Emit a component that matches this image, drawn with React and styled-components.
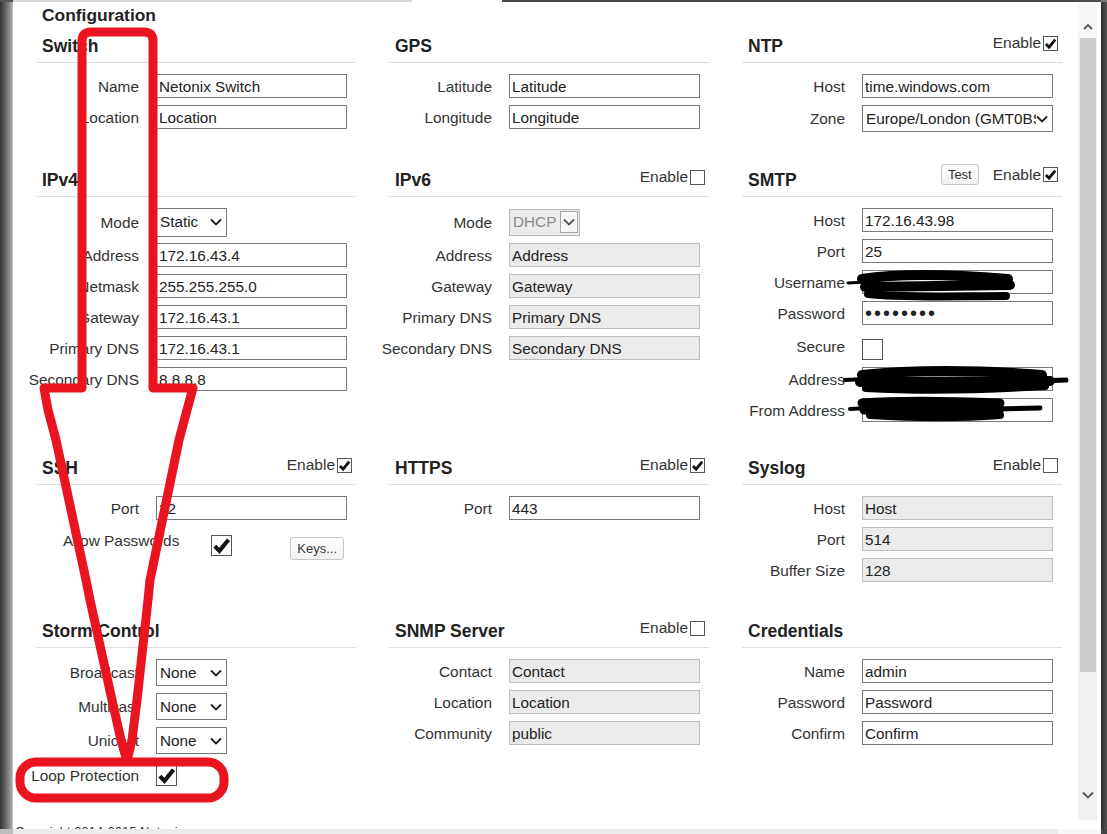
import React from "react";
import styled, { createGlobalStyle } from "styled-components";

const FONT = `"Liberation Sans", Arial, sans-serif`;
const RED = "#e9141f";

const GlobalStyle = createGlobalStyle`
  html, body {
    margin: 0;
    padding: 0;
    background: #fff;
    overflow: hidden;
  }
  body {
    font-family: ${FONT};
    color: #333;
  }
`;

// window chrome
const Window = styled.div`
  position: relative;
  width: 1107px;
  height: 834px;
  display: flex;
  flex-direction: column;
  overflow: hidden;
  background: #fff;
`;

const TopEdge = styled.div`
  flex: none;
  height: 2px;
  background: linear-gradient(
    to right,
    #555 0 13px,
    #d8d8d8 13px 412px,
    #fff 412px 502px,
    #4a4a4a 502px 1101px,
    #777 1101px
  );
`;

const Frame = styled.div`
  flex: 1;
  min-height: 0;
  display: flex;
`;

const LeftRail = styled.div`
  flex: none;
  width: 13px;
  background: linear-gradient(
    to right,
    #333 0,
    #4c4c4c 3px,
    #7d7d7d 8px,
    #a8a8a8 12px,
    #d6d6d6 13px
  );
`;

const Panel = styled.main`
  flex: 1;
  min-width: 0;
  overflow: hidden;
  padding-top: 3px;
`;

const ScrollTrack = styled.div`
  flex: none;
  width: 19px;
  margin-bottom: 9px;
  background: #f0f0f0;
  display: flex;
  flex-direction: column;
`;

const ScrollArrow = styled.div`
  display: flex;
  justify-content: center;
  align-items: ${(p) => (p.$down ? "flex-end" : "flex-start")};
  height: ${(p) => p.$h}px;
  padding: ${(p) => (p.$down ? "0 0 21px" : "21px 0 0")};
  box-sizing: border-box;
  background: ${(p) => (p.$down ? "#f0f0f0" : "#f7f7f7")};
`;

const Thumb = styled.div`
  height: 634px;
  margin: 0 1px 0 2px;
  background: #cdcdcd;
`;

const TrackRest = styled.div`
  flex: 1;
`;

const RightEdge = styled.div`
  flex: none;
  width: 10px;
  background: linear-gradient(to right, #fff 0 4px, #2c2c2c 4px, #555 10px);
`;

const BottomStrip = styled.div`
  flex: none;
  height: 5px;
  background: linear-gradient(
    to right,
    #bdbdbd 0 13px,
    #ebebeb 13px 1058px,
    #f8f8f8 1058px 1101px,
    #444 1101px
  );
`;

// page content
const PageTitle = styled.h2`
  margin: 0 0 3px 29px;
  font-size: 17.4px;
  line-height: 20px;
  font-weight: bold;
  color: #222;
`;

const Grid = styled.div`
  margin-left: 23px;
  display: grid;
  grid-template-columns: repeat(3, 320px);
  grid-template-rows: 134px 288px 163px 205px;
  column-gap: 33px;
`;

const Copyright = styled.footer`
  margin: 6px 0 0 2px;
  font-size: 13px;
  line-height: 16px;
  color: #333;
  white-space: nowrap;
`;

const Section = styled.section`
  display: flex;
  flex-direction: column;
  min-width: 0;
`;

const Header = styled.header`
  height: 34px;
  flex: none;
  display: flex;
  align-items: flex-end;
  justify-content: space-between;
  padding: 0 4px 0 6px;
  border-bottom: 1px solid #dedede;
`;

const Title = styled.h3`
  margin: 0 0 6px;
  font-size: 17.5px;
  line-height: 20px;
  font-weight: bold;
  color: #222;
`;

const Tools = styled.div`
  display: flex;
  align-items: center;
  gap: 14px;
  margin-bottom: 11px;
`;

const EnableLabel = styled.label`
  display: inline-flex;
  align-items: center;
  gap: 2px;
  font-size: 15.5px;
  line-height: 16px;
  color: #333;
`;

const Body = styled.div`
  padding-top: 11px;
  display: flex;
  flex-direction: column;
  gap: 7px;
`;

const Row = styled.div`
  display: flex;
  align-items: center;
  height: ${(p) => p.$h || 24}px;
`;

const Label = styled.label`
  flex: none;
  width: 120px;
  box-sizing: border-box;
  padding: 1px 17px 0 0;
  display: flex;
  justify-content: flex-end;
  font-size: 15.4px;
  color: #333;
  white-space: nowrap;
`;

const TextInput = styled.input`
  width: 191px;
  height: 24px;
  box-sizing: border-box;
  margin: 0;
  padding: 1px 2px 0;
  border: 1px solid ${(p) => (p.$muted ? "#bdbdbd" : "#7a7a7a")};
  background: ${(p) => (p.$muted ? "#ebebeb" : "#fff")};
  font: 15.3px ${FONT};
  color: #222;
  outline: none;

  &[type="password"] {
    font-size: 20px;
    letter-spacing: 2px;
    padding-top: 0;
  }
`;

const SelectBox = styled.div`
  display: flex;
  align-items: center;
  width: ${(p) => p.$w}px;
  height: ${(p) => p.$h}px;
  box-sizing: border-box;
  padding: ${(p) => (p.$disabled ? "0 1px 0 3px" : "0 4px 0 3px")};
  border: 1px solid ${(p) => (p.$disabled ? "#b8b8b8" : "#7a7a7a")};
  background: ${(p) => (p.$disabled ? "#ebebeb" : "#fff")};
  font-size: 15.3px;
  color: ${(p) => (p.$disabled ? "#8c8c8c" : "#222")};
`;

const SelectText = styled.span`
  flex: 1;
  min-width: 0;
  overflow: hidden;
  white-space: nowrap;
`;

const DropButton = styled.span`
  display: flex;
  align-items: center;
  justify-content: center;
  width: 18px;
  height: 22px;
  box-sizing: border-box;
  border: 1px solid #a8a8a8;
  background: #f6f6f6;
`;

const Box = styled.span`
  flex: none;
  display: inline-flex;
  align-items: center;
  justify-content: center;
  width: ${(p) => p.$size}px;
  height: ${(p) => p.$size}px;
  box-sizing: border-box;
  border: 1px solid #555;
  background: #fff;
  align-self: ${(p) => p.$self || "auto"};
  margin: ${(p) => p.$margin || 0};
`;

const SmallButton = styled.button`
  height: ${(p) => p.$h}px;
  margin: ${(p) => p.$margin || 0};
  padding: 0 6px;
  border: 1px solid #c6c6c6;
  border-radius: 3px;
  background: linear-gradient(#fff, #f2f2f2);
  font: 13px ${FONT};
  color: #333;
`;

const OptionRow = styled.div`
  display: flex;
  align-items: flex-start;
  height: 33px;
`;

const OptionText = styled.span`
  margin: 5px 0 0 27px;
  font-size: 15.4px;
  line-height: 18px;
  color: #333;
  white-space: nowrap;
`;

const Overlay = styled.svg`
  position: absolute;
  left: 0;
  top: 0;
  pointer-events: none;
`;

const Chevron = ({ color = "#222" }) => (
  <svg width="12" height="8" viewBox="0 0 12 8">
    <polyline points="1,1.5 6,6.5 11,1.5" fill="none" stroke={color} strokeWidth="1.8" />
  </svg>
);

const ChevronUp = () => (
  <svg width="10" height="7" viewBox="0 0 10 7">
    <polyline points="1,6 5,2 9,6" fill="none" stroke="#555" strokeWidth="1.8" />
  </svg>
);

const Checkbox = ({ checked, size = 15, self, margin }) => (
  <Box $size={size} $self={self} $margin={margin}>
    {checked && (
      <svg width={size - 2} height={size - 2} viewBox="0 0 12 12">
        <path d="M1.8 6.4 L4.7 9.4 L10.4 2.4" fill="none" stroke="#111" strokeWidth="2.6" />
      </svg>
    )}
  </Box>
);

const Select = ({ value, width = 71, height = 27, disabled }) => (
  <SelectBox $w={width} $h={height} $disabled={disabled}>
    <SelectText>{value}</SelectText>
    {disabled ? (
      <DropButton>
        <Chevron color="#555" />
      </DropButton>
    ) : (
      <Chevron />
    )}
  </SelectBox>
);

const SectionHead = ({ title, enable, checked, extra }) => (
  <Header>
    <Title>{title}</Title>
    {enable && (
      <Tools>
        {extra}
        <EnableLabel>
          Enable
          <Checkbox checked={checked} />
        </EnableLabel>
      </Tools>
    )}
  </Header>
);

const Field = ({ label, h, children }) => (
  <Row $h={h}>
    <Label>{label}</Label>
    {children}
  </Row>
);

const Input = ({ value, muted, type = "text" }) => (
  <TextInput type={type} defaultValue={value} readOnly $muted={muted} />
);

const Annotations = () => (
  <Overlay width="1107" height="834" viewBox="0 0 1107 834">
    {/* red arrow */}
    <path
      d="M44 388 L82 388 L82 41 Q82 32 91 32 L144 32 Q153 32 153 41 L153 388 L193 388 L187 410 L179 440 L150 580 L148 600 L137 700 L132 740 L127 761 L121 740 L112 700 L90 600 L86 580 L56 440 L48 410 Z"
      fill="none"
      stroke={RED}
      strokeWidth="9"
      strokeLinejoin="round"
    />
    <rect x="20" y="762" width="204" height="36" rx="16" fill="none" stroke={RED} strokeWidth="9" />
    {/* redaction scribbles */}
    <g fill="none" stroke="#000" strokeLinecap="round">
      <path d="M848 283 L866 282" strokeWidth="3" />
      <path d="M862 279 C900 273, 960 275, 1008 279" strokeWidth="10" />
      <path d="M865 287 L1010 285" strokeWidth="10" />
      <path d="M868 294 C900 298, 960 296, 1006 296" strokeWidth="8" />
      <path d="M845 380 L866 379" strokeWidth="4" />
      <path d="M862 375 C920 369, 990 371, 1042 375" strokeWidth="10" />
      <path d="M860 382 L1050 381" strokeWidth="10" />
      <path d="M1040 381 L1066 380" strokeWidth="5" />
      <path d="M866 388 C920 391, 980 390, 1045 386" strokeWidth="8" />
      <path d="M850 409 L868 408" strokeWidth="4" />
      <path d="M862 403 C900 400, 950 401, 1000 403" strokeWidth="9" />
      <path d="M864 410 L1000 409" strokeWidth="9" />
      <path d="M995 409 L1040 408" strokeWidth="5" />
      <path d="M870 415 C920 418, 960 418, 1000 415" strokeWidth="8" />
    </g>
  </Overlay>
);

const App = () => {
  return (
    <>
      <GlobalStyle />
      <Window>
        <TopEdge />
        <Frame>
          <LeftRail />
          <Panel>
            <PageTitle>Configuration</PageTitle>
            <Grid>
              {/* row 1 */}
              <Section>
                <SectionHead title="Switch" />
                <Body>
                  <Field label="Name"><Input value="Netonix Switch" /></Field>
                  <Field label="Location"><Input value="Location" /></Field>
                </Body>
              </Section>
              <Section>
                <SectionHead title="GPS" />
                <Body>
                  <Field label="Latitude"><Input value="Latitude" /></Field>
                  <Field label="Longitude"><Input value="Longitude" /></Field>
                </Body>
              </Section>
              <Section>
                <SectionHead title="NTP" enable checked />
                <Body>
                  <Field label="Host"><Input value="time.windows.com" /></Field>
                  <Field label="Zone" h={27}>
                    <Select value="Europe/London (GMT0BST)" width={191} />
                  </Field>
                </Body>
              </Section>

              {/* row 2 */}
              <Section>
                <SectionHead title="IPv4" />
                <Body>
                  <Field label="Mode" h={28}><Select value="Static" height={29} /></Field>
                  <Field label="Address"><Input value="172.16.43.4" /></Field>
                  <Field label="Netmask"><Input value="255.255.255.0" /></Field>
                  <Field label="Gateway"><Input value="172.16.43.1" /></Field>
                  <Field label="Primary DNS"><Input value="172.16.43.1" /></Field>
                  <Field label="Secondary DNS"><Input value="8.8.8.8" /></Field>
                </Body>
              </Section>
              <Section>
                <SectionHead title="IPv6" enable />
                <Body>
                  <Field label="Mode" h={28}><Select value="DHCP" disabled /></Field>
                  <Field label="Address"><Input value="Address" muted /></Field>
                  <Field label="Gateway"><Input value="Gateway" muted /></Field>
                  <Field label="Primary DNS"><Input value="Primary DNS" muted /></Field>
                  <Field label="Secondary DNS"><Input value="Secondary DNS" muted /></Field>
                </Body>
              </Section>
              <Section>
                <SectionHead
                  title="SMTP"
                  enable
                  checked
                  extra={<SmallButton $h={21}>Test</SmallButton>}
                />
                <Body>
                  <Field label="Host"><Input value="172.16.43.98" /></Field>
                  <Field label="Port"><Input value="25" /></Field>
                  <Field label="Username"><Input value="" /></Field>
                  <Field label="Password"><Input value="password" type="password" /></Field>
                  <Field label="Secure" h={28}><Checkbox size={21} self="flex-end" /></Field>
                  <Field label="Address"><Input value="" /></Field>
                  <Field label="From Address"><Input value="" /></Field>
                </Body>
              </Section>

              {/* row 3 */}
              <Section>
                <SectionHead title="SSH" enable checked />
                <Body>
                  <Field label="Port"><Input value="22" /></Field>
                  <OptionRow>
                    <OptionText>Allow Passwords</OptionText>
                    <Checkbox size={21} checked margin="8px 0 0 32px" />
                    <SmallButton $h={23} $margin="10px 0 0 58px">Keys...</SmallButton>
                  </OptionRow>
                </Body>
              </Section>
              <Section>
                <SectionHead title="HTTPS" enable checked />
                <Body>
                  <Field label="Port"><Input value="443" /></Field>
                </Body>
              </Section>
              <Section>
                <SectionHead title="Syslog" enable />
                <Body>
                  <Field label="Host"><Input value="Host" muted /></Field>
                  <Field label="Port"><Input value="514" muted /></Field>
                  <Field label="Buffer Size"><Input value="128" muted /></Field>
                </Body>
              </Section>

              {/* row 4 */}
              <Section>
                <SectionHead title="Storm Control" />
                <Body>
                  <Field label="Broadcast" h={27}><Select value="None" /></Field>
                  <Field label="Multicast" h={27}><Select value="None" /></Field>
                  <Field label="Unicast" h={27}><Select value="None" /></Field>
                  <Field label="Loop Protection" h={28}><Checkbox size={21} checked /></Field>
                </Body>
              </Section>
              <Section>
                <SectionHead title="SNMP Server" enable />
                <Body>
                  <Field label="Contact"><Input value="Contact" muted /></Field>
                  <Field label="Location"><Input value="Location" muted /></Field>
                  <Field label="Community"><Input value="public" muted /></Field>
                </Body>
              </Section>
              <Section>
                <SectionHead title="Credentials" />
                <Body>
                  <Field label="Name"><Input value="admin" /></Field>
                  <Field label="Password"><Input value="Password" /></Field>
                  <Field label="Confirm"><Input value="Confirm" /></Field>
                </Body>
              </Section>
            </Grid>
            <Copyright>Copyright 2014-2015 Netonix</Copyright>
          </Panel>
          <ScrollTrack>
            <ScrollArrow $h={36}>
              <ChevronUp />
            </ScrollArrow>
            <Thumb />
            <TrackRest />
            <ScrollArrow $h={40} $down>
              <Chevron color="#555" />
            </ScrollArrow>
          </ScrollTrack>
          <RightEdge />
        </Frame>
        <BottomStrip />
        <Annotations />
      </Window>
    </>
  );
};

export default App;
